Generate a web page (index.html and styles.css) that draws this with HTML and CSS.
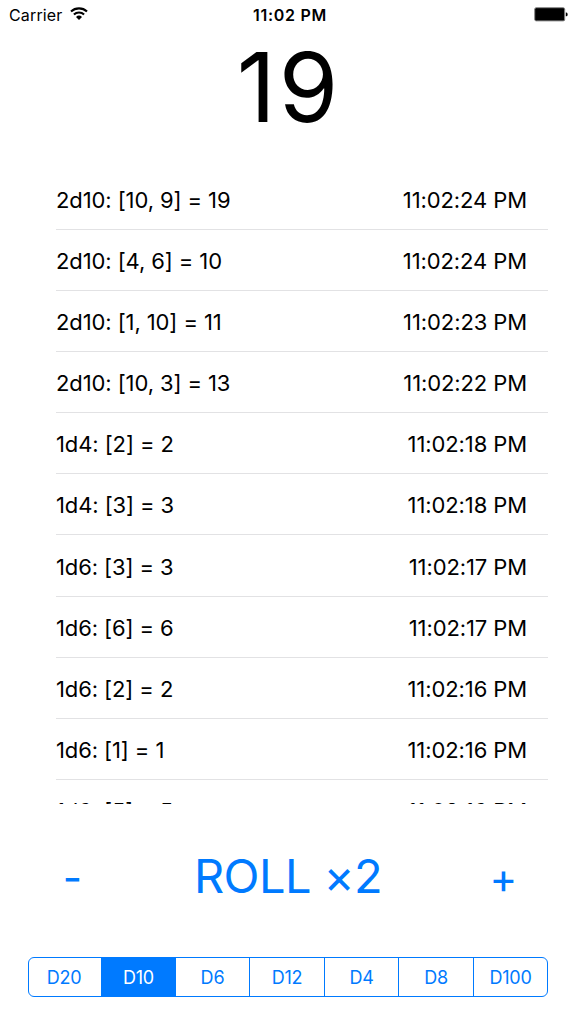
FILE: index.html
```html
<!DOCTYPE html>
<html lang="en">
<head>
  <meta charset="UTF-8">
  <meta name="viewport" content="width=device-width, initial-scale=1.0">
  <title>Dice Roller</title>
  <link rel="stylesheet" href="styles.css">
</head>
<body>
  <header class="status-bar">
    <div class="carrier">
      <span>Carrier</span>
      <svg class="wifi" width="18" height="13" viewBox="0 0 18 13">
        <path d="M1 4.6a11.6 11.6 0 0 1 16 0M3.9 7.6a7.4 7.4 0 0 1 10.2 0" fill="none" stroke="#000" stroke-width="2.1"/>
        <path d="M9 12.9L6 9.9a4.3 4.3 0 0 1 6 0z"/>
      </svg>
    </div>
    <div class="clock">11:02 PM</div>
    <div class="battery">
      <svg width="34" height="15" viewBox="0 0 34 15">
        <rect x="0.7" y="0.7" width="30" height="13.2" rx="1.5" fill="#000" stroke="#888" stroke-width="1"/>
        <path d="M31.8 5.5h0.6q1.2 0 1.2 1.9t-1.2 1.9H31.8z"/>
      </svg>
    </div>
  </header>
  <h1 class="total">19</h1>
  <main class="history">
    <ul class="rolls">
      <li class="roll"><span>2d10: [10, 9] = 19</span><time>11:02:24 PM</time></li>
      <li class="roll"><span>2d10: [4, 6] = 10</span><time>11:02:24 PM</time></li>
      <li class="roll"><span>2d10: [1, 10] = 11</span><time>11:02:23 PM</time></li>
      <li class="roll"><span>2d10: [10, 3] = 13</span><time>11:02:22 PM</time></li>
      <li class="roll"><span>1d4: [2] = 2</span><time>11:02:18 PM</time></li>
      <li class="roll"><span>1d4: [3] = 3</span><time>11:02:18 PM</time></li>
      <li class="roll"><span>1d6: [3] = 3</span><time>11:02:17 PM</time></li>
      <li class="roll"><span>1d6: [6] = 6</span><time>11:02:17 PM</time></li>
      <li class="roll"><span>1d6: [2] = 2</span><time>11:02:16 PM</time></li>
      <li class="roll"><span>1d6: [1] = 1</span><time>11:02:16 PM</time></li>
      <li class="roll"><span>1d6: [5] = 5</span><time>11:02:16 PM</time></li>
    </ul>
  </main>
  <section class="controls">
    <button class="step">-</button>
    <button class="roll-button">ROLL ×2</button>
    <button class="step">+</button>
  </section>
  <nav class="dice">
    <button class="die">D20</button>
    <button class="die selected">D10</button>
    <button class="die">D6</button>
    <button class="die">D12</button>
    <button class="die">D4</button>
    <button class="die">D8</button>
    <button class="die">D100</button>
  </nav>
</body>
</html>
```

FILE: styles.css
```css
* {
  box-sizing: border-box;
}
body {
  font-family: Inter, "Liberation Sans", sans-serif;
  margin: 0;
  height: 1024px;
  overflow: hidden;
  background-color: #fff;
  color: #000;
}
button {
  font-family: inherit;
  color: #007aff;
  background: none;
  border: none;
  padding: 0;
}
.status-bar {
  display: grid;
  grid-template-columns: 1fr auto 1fr;
  align-items: center;
  height: 30px;
  padding: 0 8px 0 9px;
  font-size: 16px;
}
.carrier {
  display: flex;
  align-items: center;
  gap: 7px;
  letter-spacing: 0.15px;
}
.wifi {
  margin-bottom: 3px;
}
.clock {
  font-weight: 600;
  padding-left: 3px;
  letter-spacing: 0.7px;
}
.battery {
  display: flex;
  justify-content: flex-end;
  padding-bottom: 1px;
}
.total {
  margin: 0;
  height: 138px;
  padding-left: 2px;
  line-height: 114px;
  font-size: 96px;
  font-weight: 400;
  letter-spacing: 3px;
  text-align: center;
}
.history {
  height: 636px;
  padding: 0.6px 28px 0 56px;
  overflow: hidden;
}
.rolls {
  list-style: none;
  margin: 0;
  padding: 0;
}
.roll {
  display: flex;
  justify-content: space-between;
  align-items: center;
  height: 61.15px;
  padding: 2px 21px 0 0;
  border-bottom: 1px solid #e2e2e4;
  font-size: 22px;
  letter-spacing: -0.1px;
}
.controls {
  display: flex;
  justify-content: space-between;
  align-items: center;
  height: 146px;
  padding: 0 28px;
}
.step {
  width: 89px;
  font-size: 42px;
}
.roll-button {
  padding-bottom: 3px;
  font-size: 47px;
  letter-spacing: -0.6px;
}
.dice {
  display: grid;
  grid-template-columns: 72px 74px 74px 75px 74px 75px 74px;
  width: 520px;
  height: 40px;
  margin: 7px 28px 0;
  border: 1px solid #007aff;
  border-radius: 6px;
  overflow: hidden;
}
.die {
  font-size: 18px;
  letter-spacing: -0.2px;
  border-left: 1px solid #007aff;
}
.die:first-child {
  padding-right: 2px;
  border-left: none;
}
.die.selected {
  background-color: #007aff;
  color: #fff;
}
```
